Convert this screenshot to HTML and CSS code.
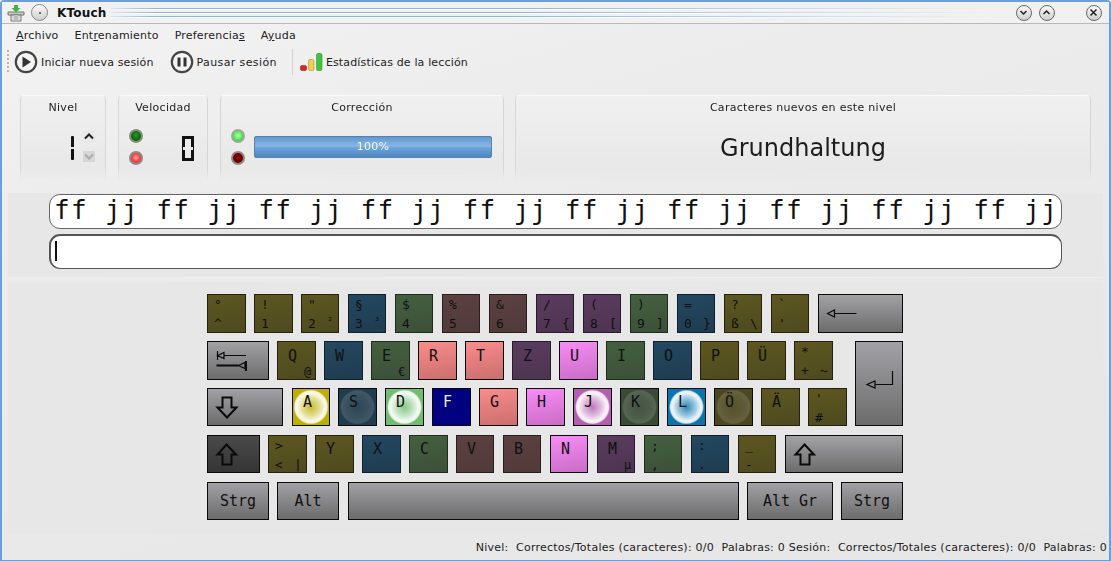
FILE: index.html
```html
<!DOCTYPE html>
<html>
  <head>
    <meta charset="utf-8">
    <link rel="stylesheet" href="styles.css">
    <title>KTouch</title>
  </head>
  <body>
    <div id="window">
      <div id="titlebar">
        <svg class="appicon" width="18" height="18" viewBox="0 0 18 18">
          <path d="M1 8h16v3H1z" fill="#c9c9c9" stroke="#777"/>
          <path d="M4 11h10v6H4z" fill="#dcdcdc" stroke="#777"/>
          <path d="M7 11h4v6H7z" fill="#bbb"/>
          <path d="M7 1h4v3h2.500L9 8.500 4.500 4H7z" fill="#3fb53f"/>
        </svg>
        <span class="wbtn pin"><i></i></span>
        <span id="caption">KTouch</span>
        <div id="stripes"></div>
        <span class="wbtn"><svg width="9" height="9" viewBox="0 0 9 9"><path d="M1.500 3l3 3 3-3" class="glyph"/></svg></span>
        <span class="wbtn"><svg width="9" height="9" viewBox="0 0 9 9"><path d="M1.500 6l3-3 3 3" class="glyph"/></svg></span>
        <span class="wbtn closebtn"><svg width="9" height="9" viewBox="0 0 9 9"><path d="M1.500 1.500l6 6M7.500 1.500l-6 6" class="glyph"/></svg></span>
      </div>

      <div id="menubar">
        <span><u>A</u>rchivo</span>
        <span>Ent<u>r</u>enamiento</span>
        <span>Preferencia<u>s</u></span>
        <span>A<u>y</u>uda</span>
      </div>

      <div id="toolbar">
        <div class="grip"></div>
        <svg class="tool" width="24" height="24" viewBox="0 0 24 24">
          <circle cx="12" cy="12" r="10.200" fill="#f4f4f4" stroke="#444" stroke-width="2.200"/>
          <path d="M8.500 6.500l8.500 5.500-8.500 5.500z" fill="#333"/>
        </svg>
        <span class="toollabel first">Iniciar nueva sesión</span>
        <svg class="tool" width="24" height="24" viewBox="0 0 24 24">
          <circle cx="12" cy="12" r="10.200" fill="#f4f4f4" stroke="#444" stroke-width="2.200"/>
          <path d="M7.500 7.500h3v9h-3zM13.500 7.500h3v9h-3z" fill="#333"/>
        </svg>
        <span class="toollabel pausar">Pausar sesión</span>
        <div class="toolsep"></div>
        <svg class="chart" width="23" height="19" viewBox="0 0 23 19">
          <rect x="0.500" y="12.500" width="6" height="5" rx="1.500" fill="#d8232a" stroke="#a81a1a" stroke-width=".6"/>
          <rect x="8.500" y="6.500" width="5.500" height="11" rx="1.500" fill="#f0cc58" stroke="#b08c20" stroke-width=".6"/>
          <rect x="16.500" y="0.500" width="5.500" height="17" rx="1.500" fill="#3ec43e" stroke="#2a9a2a" stroke-width=".6"/>
        </svg>
        <span class="toollabel">Estadísticas de la lección</span>
      </div>

      <div id="stats">
        <div class="panel nivel">
          <div class="paneltitle">Nivel</div>
          <div class="panelbody right">
            <div class="lcd-one" aria-label="1"></div>
            <div class="spin">
              <span class="up"><svg width="12" height="11" viewBox="0 0 12 11"><path d="M2 7.500l4-4 4 4" fill="none" stroke="#222" stroke-width="2"/></svg></span>
              <span class="down"><svg width="12" height="11" viewBox="0 0 12 11"><path d="M2 3.500l4 4 4-4" fill="none" stroke="#aaa" stroke-width="2"/></svg></span>
            </div>
          </div>
        </div>
        <div class="panel velocidad">
          <div class="paneltitle">Velocidad</div>
          <div class="panelbody between">
            <div class="leds">
              <span class="led green-off"></span>
              <span class="led red-on"></span>
            </div>
            <div class="lcd-zero" aria-label="0"></div>
          </div>
        </div>
        <div class="panel correccion">
          <div class="paneltitle">Corrección</div>
          <div class="panelbody between">
            <div class="leds">
              <span class="led green-on"></span>
              <span class="led red-off"></span>
            </div>
            <div class="progress">100%</div>
          </div>
        </div>
        <div class="panel nuevos">
          <div class="paneltitle">Caracteres nuevos en este nivel</div>
          <div class="newchars">Grundhaltung</div>
        </div>
      </div>

      <div id="lines">
        <div class="line teacher">ff jj ff jj ff jj ff jj ff jj ff jj ff jj ff jj ff jj ff jj</div>
        <div class="line student"><span class="cursor"></span></div>
      </div>

      <div id="keyboard">
        <div class="row">
          <div class="key pair olive"><span class="tl">°</span><span class="bl">^</span></div>
          <div class="key pair olive"><span class="tl">!</span><span class="bl">1</span></div>
          <div class="key pair olive n"><span class="tl">"</span><span class="bl">2</span><span class="br sup">²</span></div>
          <div class="key pair blue n"><span class="tl">§</span><span class="bl">3</span><span class="br sup">³</span></div>
          <div class="key pair green n"><span class="tl">$</span><span class="bl">4</span></div>
          <div class="key pair brown n"><span class="tl">%</span><span class="bl">5</span></div>
          <div class="key pair brown n"><span class="tl">&amp;</span><span class="bl">6</span></div>
          <div class="key pair purple n"><span class="tl">/</span><span class="bl">7</span><span class="br">{</span></div>
          <div class="key pair purple n"><span class="tl">(</span><span class="bl">8</span><span class="br">[</span></div>
          <div class="key pair green n"><span class="tl">)</span><span class="bl">9</span><span class="br">]</span></div>
          <div class="key pair blue n"><span class="tl">=</span><span class="bl">0</span><span class="br">}</span></div>
          <div class="key pair olive n"><span class="tl">?</span><span class="bl">ß</span><span class="br">\</span></div>
          <div class="key pair olive n"><span class="tl">`</span><span class="bl">'</span></div>
          <div class="key gray w85">
            <svg width="83" height="37" viewBox="0 0 83 37"><path d="M8.500 18.500l7-3.500v7zM15.500 18.500h22" class="arrow"/></svg>
          </div>
        </div>

        <div class="midrows">
          <div class="midleft">
            <div class="row">
              <div class="key gray w62">
                <svg width="60" height="37" viewBox="0 0 60 37"><path d="M9.500 9v9M9.500 13.500l6.500-3v6zM16 13.500h22" class="arrow"/><path d="M8.500 23.500h22" class="arrow thick"/><path d="M30.500 23.500l6.500-3v6z" class="arrow"/><path d="M38 19v10" class="arrow thick"/></svg>
              </div>
              <div class="key letter olive"><span class="main">Q</span><span class="alt">@</span></div>
              <div class="key letter blue"><span class="main">W</span></div>
              <div class="key letter green"><span class="main">E</span><span class="alt">€</span></div>
              <div class="key letter salmon"><span class="main">R</span></div>
              <div class="key letter salmon"><span class="main">T</span></div>
              <div class="key letter purple"><span class="main">Z</span></div>
              <div class="key letter pink"><span class="main">U</span></div>
              <div class="key letter green"><span class="main">I</span></div>
              <div class="key letter blue"><span class="main">O</span></div>
              <div class="key letter olive"><span class="main">P</span></div>
              <div class="key letter olive"><span class="main">Ü</span></div>
              <div class="key pair olive"><span class="tl">*</span><span class="bl">+</span><span class="br">~</span></div>
            </div>
            <div class="row low">
              <div class="key gray w76">
                <svg width="74" height="36" viewBox="0 0 74 36"><path d="M14.500 8.500h9v10h5L19 28.500 9.500 18.500h5z" class="arrow thick"/></svg>
              </div>
              <div class="key letter yellow home tight"><span class="main">A</span></div>
              <div class="key letter dblue dim"><span class="main">S</span></div>
              <div class="key letter lgreen home"><span class="main">D</span></div>
              <div class="key letter navy"><span class="main">F</span></div>
              <div class="key letter salmon"><span class="main">G</span></div>
              <div class="key letter pink"><span class="main">H</span></div>
              <div class="key letter dpink home"><span class="main">J</span></div>
              <div class="key letter dgreen dim"><span class="main">K</span></div>
              <div class="key letter lblue home"><span class="main">L</span></div>
              <div class="key letter dolive dim"><span class="main">Ö</span></div>
              <div class="key letter olive"><span class="main">Ä</span></div>
              <div class="key pair olive"><span class="tl">'</span><span class="bl">#</span></div>
            </div>
          </div>
          <div class="key gray enter">
            <svg width="46" height="83" viewBox="0 0 46 83"><path d="M11 42.500l8-3.500v7zM19 42.500h17.500V29" class="arrow"/></svg>
          </div>
        </div>

        <div class="row low gaprow">
          <div class="key shiftdown w53">
            <svg width="51" height="36" viewBox="0 0 51 36"><path d="M18.500 8.500l9.500 10h-4.500v10h-9v-10H9.500z" class="arrow thick"/></svg>
          </div>
          <div class="key pair olive"><span class="tl">&gt;</span><span class="bl">&lt;</span><span class="br">|</span></div>
          <div class="key letter olive"><span class="main">Y</span></div>
          <div class="key letter blue"><span class="main">X</span></div>
          <div class="key letter green"><span class="main">C</span></div>
          <div class="key letter brown n"><span class="main">V</span></div>
          <div class="key letter brown n"><span class="main">B</span></div>
          <div class="key letter pink n"><span class="main">N</span></div>
          <div class="key letter purple n"><span class="main">M</span><span class="alt">µ</span></div>
          <div class="key pair green n"><span class="tl">;</span><span class="bl">,</span></div>
          <div class="key pair blue n"><span class="tl">:</span><span class="bl">.</span></div>
          <div class="key pair olive n"><span class="tl">_</span><span class="bl">-</span></div>
          <div class="key gray w118">
            <svg width="116" height="36" viewBox="0 0 116 36"><path d="M18.500 8.500l9.500 10h-4.500v10h-9v-10H9.500z" class="arrow thick"/></svg>
          </div>
        </div>

        <div class="row low gaprow">
          <div class="key gray word w62">Strg</div>
          <div class="key gray word w62 n">Alt</div>
          <div class="key gray w391"></div>
          <div class="key gray word w86">Alt Gr</div>
          <div class="key gray word w62">Strg</div>
        </div>
      </div>

      <div id="statusbar">Nivel:  Correctos/Totales (caracteres): 0/0  Palabras: 0 Sesión:  Correctos/Totales (caracteres): 0/0  Palabras: 0</div>
    </div>
  </body>
</html>
```

FILE: styles.css
```css
html, body {
    margin: 0; padding: 0;
}
body {
    font-family: "DejaVu Sans", sans-serif; font-size: 11px; color: #222;
}
#window {
    box-sizing: border-box; width: 1111px; height: 561px;
    border: 2px solid #6d9fd6; border-width: 2px 2px 1px 2px;
    border-radius: 4px 4px 0 0;
    background: linear-gradient(165deg, #f3f3f3 0, #ececec 30%, #e6e6e6 100%);
    display: flex; flex-direction: column;
}

/* title bar */
#titlebar {
    height: 22px; display: flex; align-items: center;
    border-bottom: 1px solid #b9b9b9; box-sizing: border-box;
    background: #f1f1f1; padding-left: 5px;
}
.appicon { margin-right: 6px; }
#caption { font-weight: bold; font-size: 12px; color: #111; margin-left: 9px; letter-spacing: .2px; }
#stripes {
    width: 881px; height: 10px; margin-left: 4px; margin-right: 24px;
    background: repeating-linear-gradient(to bottom, #8db4e2 0, #8db4e2 1px, #fff 1px, #fff 2px, transparent 2px, transparent 4px);
    -webkit-mask-image: linear-gradient(to right, rgba(0,0,0,.2), #000 5%, #000 45%, transparent);
}
.wbtn {
    box-sizing: border-box; width: 16px; height: 16px; border-radius: 50%;
    border: 1px solid #666; background: linear-gradient(#fafafa, #cfcfcf);
    display: flex; align-items: center; justify-content: center; margin-right: 7px;
}
.wbtn.closebtn { margin-left: 24px; margin-right: 0; }
.wbtn.pin { margin: 0; width: 17px; height: 17px; border-color: #888; }
.wbtn.pin i { width: 2px; height: 2px; background: #444; border-radius: 50%; }
.glyph { fill: none; stroke: #222; stroke-width: 1.500; }

/* menu and toolbar */
#menubar {
    height: 23px; display: flex; align-items: center; padding-left: 14px; gap: 16px;
    font-size: 11px; letter-spacing: .2px;
}
#toolbar {
    height: 30px; display: flex; align-items: center; padding-left: 5px;
    font-size: 11px;
}
.grip {
    width: 2px; height: 24px; margin-right: 5px;
    background: radial-gradient(circle at 1px 1px, #b5b5b5 1px, transparent 1px) 0 0 / 2px 4px;
}
.tool { margin-right: 3px; }
.toollabel { letter-spacing: .15px; }
.toollabel.first { margin-right: 16px; }
.toollabel.pausar { letter-spacing: .38px; }
.toolsep { width: 1px; height: 26px; background: #d2d2d2; margin: 0 7px 0 15px; }
.chart { margin-right: 3px; }

/* level, speed and accuracy panels */
#stats {
    display: flex; gap: 12px; padding: 18px 18px 0 18px; height: 85px; box-sizing: content-box;
    margin-bottom: 13px;
}
.panel {
    box-sizing: border-box; height: 85px; border-radius: 4px 4px 0 0;
    border: 1px solid #d6d6d6; border-top-color: #fafafa; border-bottom: 0;
    -webkit-mask-image: linear-gradient(#000 85%, transparent);
    background: linear-gradient(#f0f0f0, #e7e7e7);
}
.nivel { width: 86px; }
.velocidad { width: 90px; }
.correccion { width: 284px; }
.nuevos { flex: 1; margin-left: -1px; }
.paneltitle {
    text-align: center; line-height: 14px; padding-top: 5px; letter-spacing: .3px;
}
.panelbody { display: flex; margin-top: 14px; padding: 0 10px; }
.panelbody.right { justify-content: flex-end; }
.panelbody.between { justify-content: space-between; }
.velocidad .panelbody { padding-right: 13px; }
.correccion .panelbody { padding-right: 11px; }
.newchars {
    text-align: center; font-size: 24px; line-height: 30px; margin-top: 18px; color: #1c1c1c;
}
.lcd-one {
    width: 3px; height: 24px; margin: 7px 9px 0 0;
    background: linear-gradient(#111 0, #111 11px, transparent 11px, transparent 13px, #111 13px);
    border-radius: 1px;
}
.spin { display: flex; flex-direction: column; gap: 9px; margin-top: 2px; }
.spin span { display: block; width: 12px; height: 11px; }
.spin svg { display: block; }
.spin .up { background: #e8e8e8; }
.spin .down { background: #d6d6d6; }
.lcd-zero {
    box-sizing: border-box; width: 12px; height: 25px; margin-top: 7px;
    border: 3px solid #111; border-width: 3px 3px; position: relative;
}
.lcd-zero::before {
    content: ""; position: absolute; left: -3px; right: -3px; top: 8px; height: 3px;
    background: linear-gradient(to right, transparent 1px, #e9e9e9 1px, #e9e9e9 3px, transparent 3px, transparent 9px, #e9e9e9 9px, #e9e9e9 11px, transparent 11px);
}
.leds { display: flex; flex-direction: column; gap: 8px; }
.led {
    display: block; box-sizing: border-box; width: 14px; height: 14px; border-radius: 50%;
    border: 2px solid #8a8a86;
}
.green-off { background: radial-gradient(circle at 50% 40%, #1f9a1f, #034d03); }
.red-on { background: radial-gradient(circle at 50% 45%, #ffb0b0 0, #ff4a4a 45%, #e02020 100%); }
.green-on { background: radial-gradient(circle at 50% 45%, #c8ffc8 0, #55f055 50%, #22c022 100%); border-color: #a5a5a0; }
.red-off { background: radial-gradient(circle at 50% 45%, #900000, #5a0000); }
.progress {
    box-sizing: border-box; width: 238px; height: 22px; margin-top: 7px; border-radius: 2px;
    border: 1px solid #5f7f9f; color: #f4f8fc; text-align: center; line-height: 20px;
    letter-spacing: .3px;
    background: linear-gradient(#5d98d3 0, #8ab6e4 45%, #6ba2da 55%, #4b86c2 100%);
}

/* lesson lines */
#lines {
    margin: 0 6px 4px 6px; padding: 1px 41px 8px 41px;
    background: #e7e7e7;
    border-bottom: 1px solid #efefef;
}
.line {
    box-sizing: border-box; height: 35px; background: #fff;
    border: 1px solid #666; border-radius: 11px;
    font-family: "DejaVu Sans Mono", monospace; font-size: 26px; line-height: 31px;
    letter-spacing: 1.37px; padding-left: 4px; white-space: pre; color: #111;
}
.line.teacher { margin-bottom: 5px; }
.line.student {
    border-left-width: 2px; border-top-width: 2px; border-color: #555;
    display: flex; align-items: center; padding-left: 4px;
}
.cursor { width: 2px; height: 20px; margin-bottom: 3px; background: #111; }

/* keyboard */
#keyboard {
    flex: 1; margin: 0 6px; padding: 12px 0 0 199px; background: #e7e7e7;
    font-family: "DejaVu Sans Mono", monospace;
}
.row { display: flex; gap: 8px; height: 39px; }
.row.low { height: 38px; }
.gaprow { margin-top: 9px; }
.midrows { display: flex; margin-top: 8px; height: 85px; }
.midleft { display: flex; flex-direction: column; gap: 8px; width: 648px; }
.key {
    box-sizing: border-box; width: 39px; border: 1px solid #0a0a0a; color: #101010;
    flex: none; overflow: hidden;
}
.key.n { width: 38px; margin-right: 1px; }
.key.tight { width: 38px; }
.key svg { display: block; }
.w53 { width: 53px; } .w62 { width: 62px; } .w76 { width: 76px; margin-right: 1px; }
.w85 { width: 85px; } .w86 { width: 86px; } .w118 { width: 118px; } .w391 { width: 391px; }
.key.w62.n { width: 62px; }
.enter { width: 48px; height: 85px; }

.pair {
    display: grid; grid-template-columns: 15px 1fr; grid-template-rows: 16px 16px; column-gap: 4px; row-gap: 3px;
    padding: 2px 0 0 6px; font-size: 13px; line-height: 16px;
}
.tl { grid-row: 1; grid-column: 1; }
.bl { grid-row: 2; grid-column: 1; }
.br { grid-row: 2; grid-column: 2; }
.sup { font-size: 10px; line-height: 12px; }
.letter {
    display: grid; grid-template-columns: 16px 1fr; grid-template-rows: 16px 16px;
    padding: 6px 0 0 10px; font-size: 15px; line-height: 16px;
}
.low .letter { padding-top: 5px; }
.main { grid-row: 1; grid-column: 1; }
.alt { grid-row: 2; grid-column: 2; font-size: 12px; }
.word {
    display: flex; align-items: center; justify-content: center; font-size: 15px;
    padding-bottom: 1px;
}
.arrow { fill: none; stroke: #0a0a0a; stroke-width: 1.200; }
.arrow.thick { stroke-width: 2; }

/* finger zones */
.olive { background: linear-gradient(170deg, #5c5720, #4e4a1f); border-color: #24220f; }
.blue { background: linear-gradient(170deg, #234860, #1f3c50); border-color: #10202b; }
.green { background: linear-gradient(170deg, #44603f, #3c5039); border-color: #1e2b1d; }
.brown { background: linear-gradient(170deg, #5c4141, #503a3a); border-color: #2a1d1d; }
.purple { background: linear-gradient(170deg, #5a3c5e, #4c3550); border-color: #281c2a; }
.gray { background: linear-gradient(#a2a2a6, #6c6c6c); }
.shiftdown { background: linear-gradient(#4a4a4a, #353535); }
.salmon { background: linear-gradient(170deg, #f88c8c, #cc6e6e); }
.pink { background: linear-gradient(170deg, #f78cf5, #ca6cc6); }
.navy { background: #000080; color: #eef; }
.yellow { background-color: #bfae00; }
.lgreen { background-color: #72bd72; }
.dpink { background-color: #b35fae; }
.lblue { background-color: #0a74ae; }
.dblue { background-color: #213c4c; }
.dgreen { background-color: #394a36; }
.dolive { background-color: #4b471f; }
.home {
    background-image: radial-gradient(circle 17.500px at 50% 50%, rgba(255,255,255,.15) 0, rgba(255,255,255,.6) 9px, rgba(255,255,255,.92) 14px, rgba(255,255,255,.85) 16px, rgba(255,255,255,0) 17.500px);
}
.dim {
    background-image: radial-gradient(circle 17.500px at 50% 50%, rgba(255,255,255,.06) 0, rgba(255,255,255,.1) 10px, rgba(255,255,255,.15) 16px, rgba(255,255,255,0) 17.500px);
}

#statusbar {
    height: 26px; display: flex; align-items: center; justify-content: flex-end;
    padding-right: 2px; white-space: pre; font-size: 11px; letter-spacing: .245px;
}
```
